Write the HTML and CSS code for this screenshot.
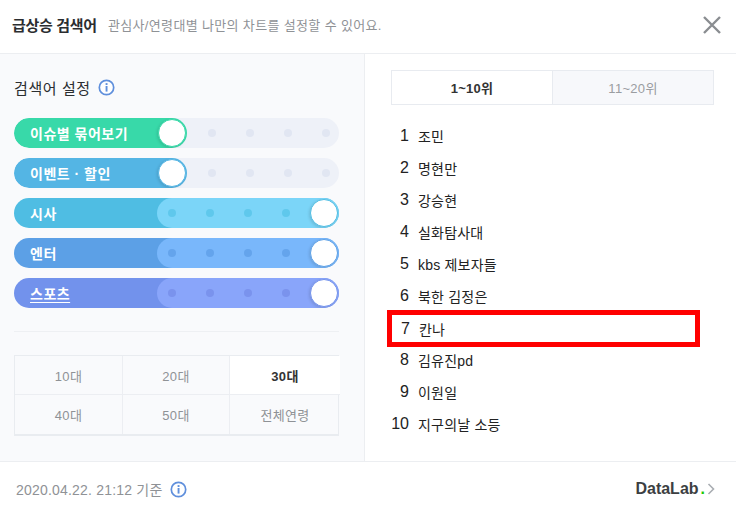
FILE: index.html
```html
<!DOCTYPE html>
<html lang="ko">
	<head>
		<meta charset="utf-8">
		<title>급상승 검색어</title>
		<link rel="stylesheet" href="styles.css">
	</head>
	<body>
		<div class="popup">
			<div class="popup-header">
				<strong class="popup-title">급상승 검색어</strong>
				<span class="popup-desc">관심사/연령대별 나만의 차트를 설정할 수 있어요.</span>
				<a class="close-btn" href="javascript:;">
					<svg width="20" height="20" viewBox="0 0 20 20"><path d="M2 2L18 18M18 2L2 18" stroke="#8a8d91" stroke-width="2.4" fill="none"/></svg>
				</a>
			</div>
			<div class="popup-body">
				<div class="setting">
					<div class="setting-title">검색어 설정
						<svg class="info-icon" width="17" height="17" viewBox="0 0 17 17"><circle cx="8.5" cy="8.5" r="7.2" fill="#fff" stroke="#5f8fdc" stroke-width="1.7"/><rect x="7.6" y="7" width="1.9" height="5.6" fill="#5f8fdc"/><rect x="7.6" y="4.1" width="1.9" height="1.9" fill="#5f8fdc"/></svg>
					</div>
					<div class="switch-list">
						<div class="switch switch-off">
							<div class="switch-fill green"><span class="switch-label">이슈별 묶어보기</span><i class="knob knob-green"></i></div>
							<div class="dots"><i></i><i></i><i></i><i></i></div>
						</div>
						<div class="switch switch-off">
							<div class="switch-fill sky"><span class="switch-label">이벤트 · 할인</span><i class="knob knob-sky"></i></div>
							<div class="dots"><i></i><i></i><i></i><i></i></div>
						</div>
						<div class="switch switch-on cyan">
							<span class="switch-label">시사</span>
							<div class="switch-pale pale-cyan">
								<div class="dots"><i></i><i></i><i></i><i></i></div>
								<i class="knob knob-cyan"></i>
							</div>
						</div>
						<div class="switch switch-on blue">
							<span class="switch-label">엔터</span>
							<div class="switch-pale pale-blue">
								<div class="dots"><i></i><i></i><i></i><i></i></div>
								<i class="knob knob-blue"></i>
							</div>
						</div>
						<div class="switch switch-on violet">
							<span class="switch-label underline">스포츠</span>
							<div class="switch-pale pale-violet">
								<div class="dots"><i></i><i></i><i></i><i></i></div>
								<i class="knob knob-violet"></i>
							</div>
						</div>
					</div>
					<div class="age-grid">
						<div class="age">10대</div>
						<div class="age">20대</div>
						<div class="age age-active">30대</div>
						<div class="age">40대</div>
						<div class="age">50대</div>
						<div class="age">전체연령</div>
					</div>
				</div>
				<div class="chart">
					<div class="tabs">
						<div class="tab tab-active">1~10위</div>
						<div class="tab">11~20위</div>
					</div>
					<ul class="rank-list">
						<li><span class="num">1</span><span class="word">조민</span></li>
						<li><span class="num">2</span><span class="word">명현만</span></li>
						<li><span class="num">3</span><span class="word">강승현</span></li>
						<li><span class="num">4</span><span class="word">실화탐사대</span></li>
						<li><span class="num">5</span><span class="word">kbs 제보자들</span></li>
						<li><span class="num">6</span><span class="word">북한 김정은</span></li>
						<li class="marked"><span class="num">7</span><span class="word">칸나</span></li>
						<li><span class="num">8</span><span class="word">김유진pd</span></li>
						<li><span class="num">9</span><span class="word">이원일</span></li>
						<li><span class="num">10</span><span class="word">지구의날 소등</span></li>
					</ul>
				</div>
			</div>
			<div class="popup-footer">
				<span class="footer-time">2020.04.22. 21:12 기준</span>
				<svg class="info-icon" width="17" height="17" viewBox="0 0 17 17"><circle cx="8.5" cy="8.5" r="7.2" fill="#fff" stroke="#5f8fdc" stroke-width="1.7"/><rect x="7.6" y="7" width="1.9" height="5.6" fill="#5f8fdc"/><rect x="7.6" y="4.1" width="1.9" height="1.9" fill="#5f8fdc"/></svg>
				<a class="datalab" href="javascript:;">DataLab<em>.</em>
					<svg width="8" height="12" viewBox="0 0 8 12"><path d="M1.5 1L6.5 6L1.5 11" stroke="#a9adb2" stroke-width="1.6" fill="none"/></svg>
				</a>
			</div>
		</div>
	</body>
</html>
```

FILE: styles.css
```css
* {
	box-sizing: border-box;
}
html,body {
	margin: 0;
	padding: 0;
}
body {
	background-color: #fff;
	font-family: "Liberation Sans", "Noto Sans CJK KR", sans-serif;
}
a {
	text-decoration: none;
}
i {
	display: block;
}
.popup {
	width: 736px;
	height: 516px;
	display: flex;
	flex-direction: column;
}
.popup-header {
	height: 54px;
	flex: none;
	display: flex;
	align-items: center;
	padding: 0 14px 4px 12px;
	border-bottom: 1px solid #eceef1;
}
.popup-title {
	font-size: 15px;
	letter-spacing: -0.3px;
	color: #2b2d30;
}
.popup-desc {
	margin-left: 11px;
	font-size: 13px;
	letter-spacing: 0.35px;
	color: #8f9296;
}
.close-btn {
	margin-left: auto;
	height: 20px;
}
.popup-body {
	flex: 1;
	display: flex;
	min-height: 0;
}
.setting {
	width: 365px;
	flex: none;
	padding: 22px 25px 0 14px;
	background-color: #f9fafc;
	border-right: 1px solid #eceef1;
}
.setting-title {
	display: flex;
	align-items: center;
	gap: 7px;
	height: 22px;
	font-size: 15px;
	letter-spacing: 0.6px;
	color: #2b2d30;
}
.switch-list {
	margin-top: 20px;
	display: flex;
	flex-direction: column;
	gap: 10px;
	padding-bottom: 23px;
	border-bottom: 1px solid #eef0f3;
}
.switch {
	height: 30px;
	border-radius: 15px;
	display: flex;
	align-items: center;
	overflow: hidden;
}
.switch-off {
	background-color: #eef1f8;
}
.switch-fill {
	width: 173px;
	height: 30px;
	flex: none;
	display: flex;
	align-items: center;
	justify-content: space-between;
	padding-right: 1px;
	border-radius: 15px;
}
.switch-label {
	padding-left: 16px;
	font-size: 14px;
	font-weight: bold;
	letter-spacing: 0.5px;
	color: #fff;
}
.underline {
	text-decoration: underline;
	text-underline-offset: 3px;
}
.knob {
	width: 28px;
	height: 28px;
	flex: none;
	border-radius: 50%;
	background-color: #fff;
	box-shadow: -1px 1px 3px rgba(0,0,0,.12);
}
.dots {
	display: flex;
	align-items: center;
}
.dots i {
	width: 8px;
	height: 8px;
	border-radius: 50%;
}
.switch-off .dots {
	margin-left: 21px;
	gap: 30px;
}
.switch-off .dots i {
	background-color: #e1e6f2;
}
.switch-on {
	justify-content: space-between;
}
.switch-pale {
	width: 182px;
	height: 30px;
	flex: none;
	display: flex;
	align-items: center;
	justify-content: space-between;
	padding: 0 1px 0 11px;
	border-radius: 15px;
}
.switch-pale .dots {
	gap: 30px;
}
.green { background-color: #38d9a9; }
.sky { background-color: #54b5e4; }
.cyan { background-color: #4fbde3; }
.blue { background-color: #5ca0e6; }
.violet { background-color: #7292ec; }
.pale-cyan { background-color: #7bd5f8; }
.pale-blue { background-color: #79b7fb; }
.pale-violet { background-color: #89a5fa; }
.pale-cyan .dots i { background-color: #5fc8ec; }
.pale-blue .dots i { background-color: #64a4ec; }
.pale-violet .dots i { background-color: #7a93ed; }
.knob-green { border: 1px solid #38d9a9; }
.knob-sky { border: 1px solid #54b5e4; }
.knob-cyan { border: 1px solid #4fbde3; }
.knob-blue { border: 1px solid #5ca0e6; }
.knob-violet { border: 1px solid #7292ec; }
.age-grid {
	margin-top: 23px;
	display: grid;
	grid-template-columns: 108px 107px 110px;
	grid-auto-rows: 39px;
	border: 1px solid #e9ecf0;
	border-bottom-width: 2px;
}
.age {
	display: flex;
	align-items: center;
	justify-content: center;
	font-size: 13px;
	letter-spacing: 0.3px;
	color: #8f9296;
	border-right: 1px solid #eceef2;
}
.age:nth-child(-n+3) {
	border-bottom: 1px solid #eceef2;
}
.age:nth-child(3n) {
	border-right: 0;
}
.age-active {
	background-color: #fff;
	font-weight: bold;
	color: #333;
}
.chart {
	flex: 1;
	padding: 16px 22px 0 26px;
}
.tabs {
	display: flex;
	height: 35px;
	border: 1px solid #e8ebf0;
}
.tab {
	flex: 1;
	display: flex;
	align-items: center;
	justify-content: center;
	font-size: 13px;
	letter-spacing: 0.3px;
	color: #9a9da1;
	background-color: #f7f8fb;
}
.tab-active {
	background-color: #fff;
	border-right: 1px solid #e8ebf0;
	font-weight: bold;
	color: #333;
}
.rank-list {
	list-style: none;
	margin: 15px 0 0;
	padding: 0;
	width: 310px;
}
.rank-list li {
	height: 32px;
	margin-left: -4px;
	padding-left: 4px;
	display: flex;
	align-items: center;
	color: #222;
}
.num {
	width: 27px;
	padding-right: 9px;
	text-align: right;
	font-size: 16px;
}
.word {
	font-size: 14px;
	letter-spacing: 0.2px;
}
.rank-list .marked {
	height: 37px;
	margin: -2px -6px -3px -4px;
	border: 5px solid #ff0000;
	padding-left: 0;
	width: 313px;
}
.popup-footer {
	height: 55px;
	flex: none;
	display: flex;
	align-items: center;
	padding: 0 21px 0 16px;
	border-top: 1px solid #eceef1;
}
.footer-time {
	margin-right: 7px;
	font-size: 14px;
	letter-spacing: 0.2px;
	color: #8f9296;
}
.datalab {
	margin-left: auto;
	display: flex;
	align-items: center;
	gap: 2px;
	font-size: 16px;
	font-weight: bold;
	color: #3c3f42;
}
.datalab em {
	font-style: normal;
	color: #1ec800;
}
```
